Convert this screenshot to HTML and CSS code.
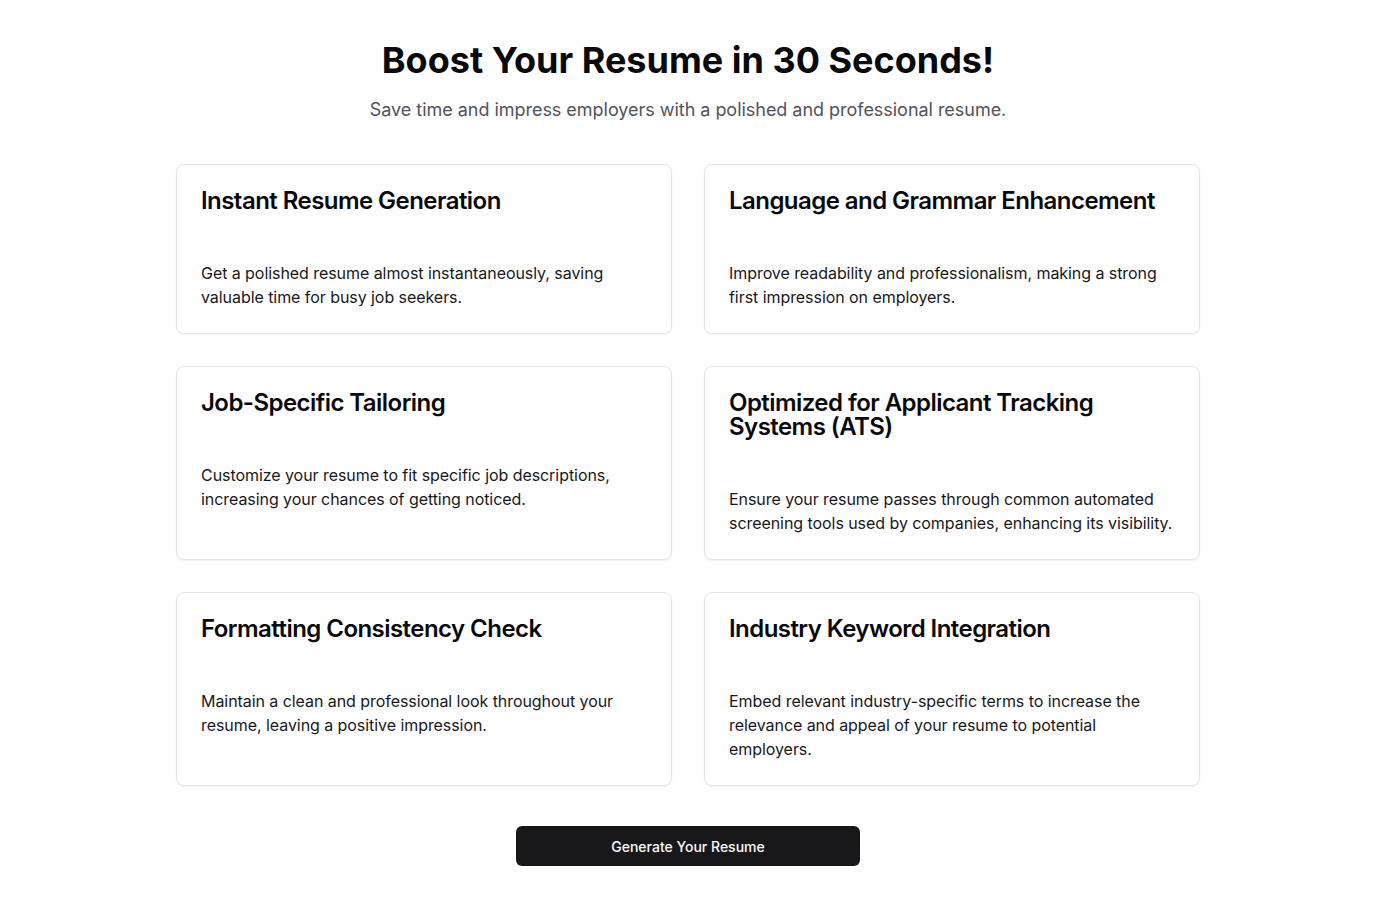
FILE: index.html
```html
<!DOCTYPE html>
<html lang="en">
<head>
<meta charset="utf-8">
<title>Boost Your Resume</title>
<link rel="stylesheet" href="styles.css">
</head>
<body>
<main class="page">
  <h1 class="headline">Boost Your Resume in 30 Seconds!</h1>
  <p class="subhead">Save time and impress employers with a polished and professional resume.</p>
  <section class="grid">
    <div class="card">
      <h3 class="card-title">Instant Resume Generation</h3>
      <p class="card-text">Get a polished resume almost instantaneously, saving valuable time for busy job seekers.</p>
    </div>
    <div class="card">
      <h3 class="card-title">Language and Grammar Enhancement</h3>
      <p class="card-text">Improve readability and professionalism, making a strong first impression on employers.</p>
    </div>
    <div class="card">
      <h3 class="card-title">Job-Specific Tailoring</h3>
      <p class="card-text">Customize your resume to fit specific job descriptions, increasing your chances of getting noticed.</p>
    </div>
    <div class="card">
      <h3 class="card-title">Optimized for Applicant Tracking Systems (ATS)</h3>
      <p class="card-text">Ensure your resume passes through common automated screening tools used by companies, enhancing its visibility.</p>
    </div>
    <div class="card">
      <h3 class="card-title">Formatting Consistency Check</h3>
      <p class="card-text">Maintain a clean and professional look throughout your resume, leaving a positive impression.</p>
    </div>
    <div class="card">
      <h3 class="card-title">Industry Keyword Integration</h3>
      <p class="card-text">Embed relevant industry-specific terms to increase the relevance and appeal of your resume to potential employers.</p>
    </div>
  </section>
  <div class="actions">
    <button class="cta" type="button">Generate Your Resume</button>
  </div>
</main>
</body>
</html>
```

FILE: styles.css
```css
* { box-sizing: border-box; }
html, body { margin: 0; padding: 0; background: #ffffff; }
body {
  font-family: Inter, "Noto Sans", sans-serif;
  color: #0a0a0a;
}
.page {
  width: 1024px;
  margin: 0 auto;
  padding-top: 40px;
  display: flex;
  flex-direction: column;
  align-items: stretch;
}
.headline {
  margin: 0 0 16px;
  font-size: 36px;
  line-height: 40px;
  font-weight: 700;
  text-align: center;
  color: #09090b;
}
.subhead {
  margin: 0 0 40px;
  font-size: 18px;
  line-height: 28px;
  text-align: center;
  letter-spacing: -0.03px;
  color: #52525b;
}
.grid {
  display: grid;
  grid-template-columns: 1fr 1fr;
  gap: 32px;
}
.card {
  border: 1px solid #e4e4e7;
  border-radius: 8px;
  background: #fff;
  box-shadow: 0 1px 2px rgba(0,0,0,0.05);
  padding: 24px;
}
.card-title {
  margin: 0 0 48px;
  font-size: 24px;
  line-height: 24px;
  font-weight: 600;
  letter-spacing: -0.55px;
  color: #09090b;
}
.card-text {
  margin: 0;
  font-size: 16px;
  line-height: 24px;
  letter-spacing: -0.06px;
  color: #18181b;
}
.actions {
  display: flex;
  justify-content: center;
  margin-top: 40px;
}
.cta {
  width: 344px;
  height: 40px;
  border: none;
  border-radius: 6px;
  background: #18181b;
  color: #fafafa;
  font-family: Inter, "Noto Sans", sans-serif;
  font-size: 14px;
  font-weight: 500;
  cursor: pointer;
}
```
